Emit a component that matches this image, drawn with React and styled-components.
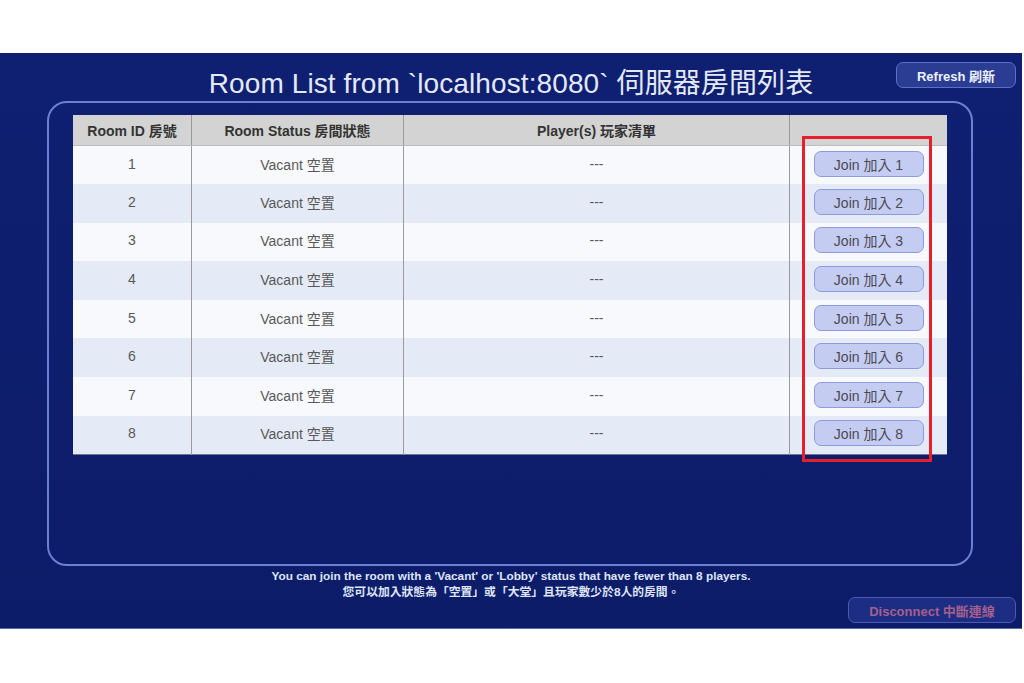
import React from "react";
import styled, { createGlobalStyle } from "styled-components";

const rooms = [1, 2, 3, 4, 5, 6, 7, 8].map((id) => ({
  id,
  status: "Vacant 空置",
  players: "---",
}));

export default function App() {
  return (
    <>
      <GlobalStyle />
      <Page>
        <Screen>
          <TopBar>
            <span />
            <Title>Room List from `localhost:8080` 伺服器房間列表</Title>
            <RefreshButton>Refresh 刷新</RefreshButton>
          </TopBar>

          <Panel>
            <TableWrap>
              <Table>
                <thead>
                  <tr>
                    <Th $w={118}>Room ID 房號</Th>
                    <Th $w={211}>Room Status 房間狀態</Th>
                    <Th $w={385}>Player(s) 玩家清單</Th>
                    <Th />
                  </tr>
                </thead>
                <tbody>
                  {rooms.map((room) => (
                    <Row key={room.id} $alt={room.id % 2 === 0}>
                      <Td>{room.id}</Td>
                      <Td>{room.status}</Td>
                      <Td>{room.players}</Td>
                      <Td>
                        <JoinButton>Join 加入 {room.id}</JoinButton>
                      </Td>
                    </Row>
                  ))}
                </tbody>
              </Table>
              <Highlight />
            </TableWrap>
          </Panel>

          <Footer>
            <Note>
              You can join the room with a 'Vacant' or 'Lobby' status that have
              fewer than 8 players.
              <br />
              您可以加入狀態為「空置」或「大堂」且玩家數少於8人的房間。
            </Note>
            <FooterBar>
              <DisconnectButton>Disconnect 中斷連線</DisconnectButton>
            </FooterBar>
          </Footer>
        </Screen>
      </Page>
    </>
  );
}

const GlobalStyle = createGlobalStyle`
  html, body {
    margin: 0;
    padding: 0;
    background: #ffffff;
  }
  body {
    font-family: "Liberation Sans", "Noto Sans CJK TC", sans-serif;
  }
`;

const Page = styled.div`
  width: 1024px;
  height: 683px;
  padding-top: 53px;
  box-sizing: border-box;
  background: #ffffff;
`;

const Screen = styled.div`
  width: 1022px;
  height: 576px;
  background: linear-gradient(180deg, #0f2072 0%, #0c1c69 100%);
  display: flex;
  flex-direction: column;
  box-sizing: border-box;
  border-bottom: 1px solid #5a6aa8;
`;

const TopBar = styled.div`
  display: grid;
  grid-template-columns: 1fr auto 1fr;
  align-items: start;
  height: 48px;
`;

const Title = styled.h1`
  margin: 15px 0 0;
  font-size: 28px;
  font-weight: 400;
  line-height: 32px;
  color: #e4e9f8;
  letter-spacing: 0.1px;
  white-space: nowrap;
`;

const BaseButton = styled.button`
  font-family: "Liberation Sans", "Noto Sans CJK TC", sans-serif;
  height: 26px;
  border-radius: 7px;
  box-sizing: border-box;
  cursor: pointer;
  padding: 0;
`;

const RefreshButton = styled(BaseButton)`
  justify-self: end;
  margin: 9px 6px 0 0;
  width: 120px;
  background: #2a3d93;
  border: 1px solid #5e70c6;
  color: #eef1fb;
  font-size: 13px;
  font-weight: 700;
`;

const Panel = styled.div`
  margin: 0 49px 0 47px;
  height: 465px;
  box-sizing: border-box;
  border: 2px solid #6d7fd2;
  border-radius: 20px;
  padding: 12px 24px;
`;

const TableWrap = styled.div`
  position: relative;
`;

const Table = styled.table`
  width: 100%;
  border-collapse: collapse;
  table-layout: fixed;
  font-size: 14px;
  color: #585858;
  border-bottom: 1px solid #6d7590;
`;

const Th = styled.th`
  width: ${(p) => (p.$w ? `${p.$w}px` : "auto")};
  height: 29px;
  background: #d3d3d3;
  color: #333;
  font-size: 14px;
  font-weight: 700;
  border-left: 1px solid #9a9a9a;
  border-bottom: 1px solid #bdbdbd;
  padding: 0 0 1px;
  vertical-align: middle;
  &:first-child {
    border-left: none;
  }
`;

const Row = styled.tr`
  height: 38.6px;
  background: ${(p) => (p.$alt ? "#e5ebf6" : "#f8f9fc")};
`;

const Td = styled.td`
  text-align: center;
  vertical-align: middle;
  padding: 0 0 3px;
  border-left: 1px solid #9a9a9a;
  &:first-child {
    border-left: none;
  }
`;

const JoinButton = styled(BaseButton)`
  width: 110px;
  background: #c4ccf1;
  border: 1px solid #8d9adf;
  color: #4a4a55;
  font-size: 14px;
`;

const Highlight = styled.div`
  position: absolute;
  left: 729px;
  top: 21px;
  width: 130px;
  height: 326px;
  border: 3px solid #e3202b;
  box-sizing: border-box;
  pointer-events: none;
`;

const Footer = styled.div`
  display: flex;
  flex-direction: column;
`;

const Note = styled.p`
  margin: 2px 0 0;
  text-align: center;
  font-size: 11.8px;
  font-weight: 700;
  line-height: 16px;
  color: #dfe5f7;
`;

const FooterBar = styled.div`
  display: flex;
  justify-content: flex-end;
  padding-right: 6px;
  margin-top: -3px;
`;

const DisconnectButton = styled(BaseButton)`
  width: 168px;
  background: #1d2d84;
  border: 1px solid #4a5ab0;
  color: #a5608c;
  font-size: 13px;
  font-weight: 700;
`;
